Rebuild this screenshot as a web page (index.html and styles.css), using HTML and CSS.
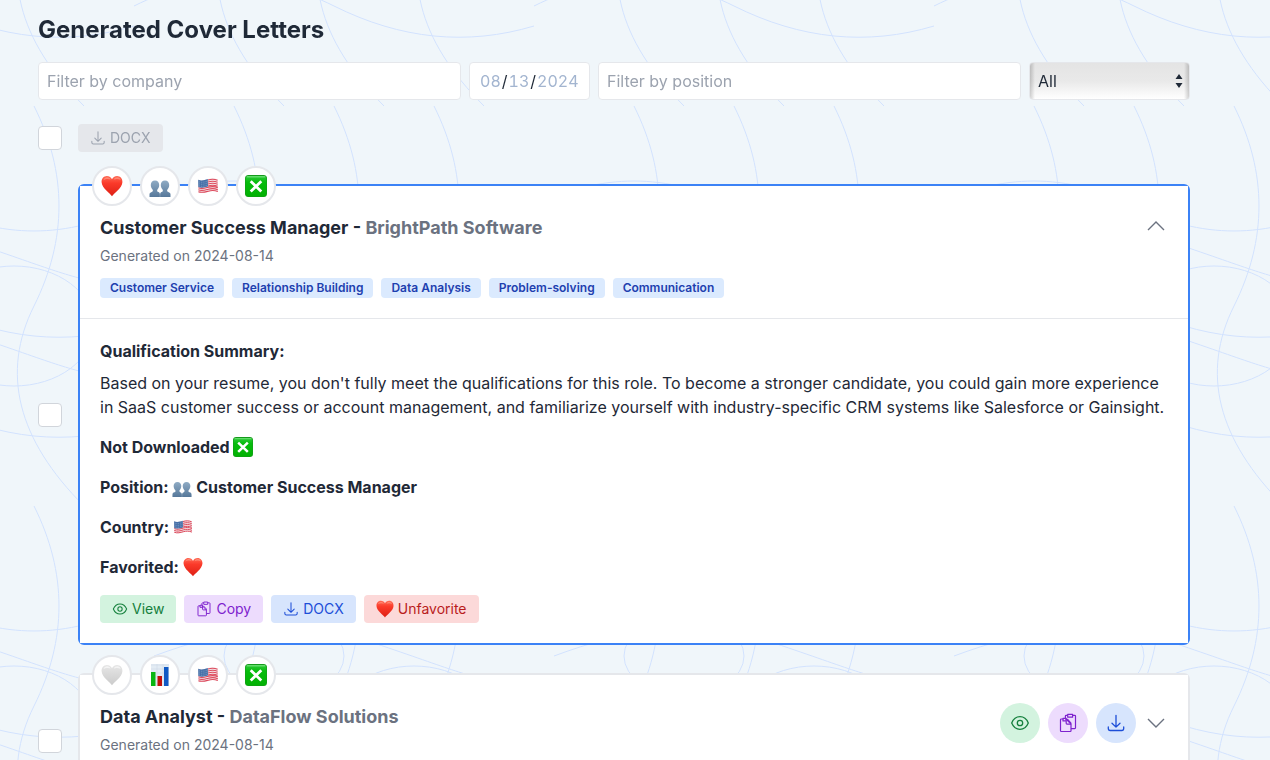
FILE: index.html
```html
<!DOCTYPE html>
<html lang="en-US">
<head>
<meta charset="utf-8">
<meta name="viewport" content="width=device-width, initial-scale=1">
<title>Generated Cover Letters</title>
<link rel="stylesheet" href="styles.css">
</head>
<body>
<svg class="backdrop" aria-hidden="true">
  <defs>
    <pattern id="waves" width="400" height="400" patternUnits="userSpaceOnUse" patternTransform="translate(134 106)">
      <g fill="none" stroke="#d2e2fe">
        <path d="M100 0C133.3 66.7 133.3 133.3 100 200S83.3 333.3 150 400"/>
        <path d="M200 0C233.3 66.7 233.3 133.3 200 200S183.3 333.3 250 400"/>
        <path d="M300 0C333.3 66.7 333.3 133.3 300 200S283.3 333.3 350 400"/>
        <path d="M0 100C66.7 66.7 133.3 66.7 200 100S333.3 133.3 400 100"/>
        <path d="M0 200C66.7 166.7 133.3 166.7 200 200S333.3 240 400 220"/>
        <path d="M0 300C66.7 266.7 133.3 266.7 200 300S333.3 340 400 320"/>
        <path d="M20 150C90 124 160 110 240 137S330 170 380 180"/>
        <path d="M20 243C90 217 160 203 240 230S330 263 380 273"/>
        <ellipse cx="150" cy="150" rx="60" ry="40"/>
        <ellipse cx="280" cy="220" rx="80" ry="60"/>
      </g>
    </pattern>
    <linearGradient id="heart-red" x1="0" y1="0" x2="0" y2="1"><stop offset="0" stop-color="#ff6a55"/><stop offset=".35" stop-color="#fb3a2a"/><stop offset="1" stop-color="#dd1f14"/></linearGradient>
    <linearGradient id="heart-grey" x1="0" y1="0" x2="0" y2="1"><stop offset="0" stop-color="#e6e6e6"/><stop offset="1" stop-color="#cbcbcb"/></linearGradient>
    <linearGradient id="bust" x1="0" y1="0" x2="0" y2="1"><stop offset="0" stop-color="#8fabc4"/><stop offset="1" stop-color="#56789a"/></linearGradient>
    <linearGradient id="green" x1="0" y1="0" x2="0" y2="1"><stop offset="0" stop-color="#2fc83a"/><stop offset=".3" stop-color="#06bd0c"/><stop offset="1" stop-color="#02b003"/></linearGradient>
    <symbol id="e-heart" viewBox="0 0 22 22">
      <path fill="url(#heart-red)" d="M11 21.300C9.500 18.500 1 13.500.6 7.200.4 3.800 2.600 1 5.900 1 8.300 1 10.200 2.300 11 4.300 11.800 2.300 13.700 1 16.100 1c3.300 0 5.500 2.800 5.300 6.200C21 13.500 12.500 18.500 11 21.300z"/>
      <path fill="#ff9a84" opacity=".7" d="M2.500 5.200C3 3.200 4.500 2.300 6.200 2.300s2.900.9 3.400 2.300C8 3.700 4.500 3.600 2.500 5.200zM12.800 4.600c.6-1.500 1.800-2.300 3.400-2.300 1.700 0 3 .9 3.500 2.600-2-1.200-5-1.200-6.900-.3z"/>
    </symbol>
    <symbol id="e-heart-off" viewBox="0 0 22 22">
      <path fill="url(#heart-grey)" d="M11 21.300C9.500 18.500 1 13.500.6 7.200.4 3.800 2.600 1 5.900 1 8.300 1 10.200 2.300 11 4.300 11.800 2.300 13.700 1 16.100 1c3.300 0 5.500 2.800 5.300 6.200C21 13.500 12.500 18.500 11 21.300z"/>
      <path fill="#fff" opacity=".6" d="M2.500 5.200C3 3.200 4.500 2.300 6.200 2.300s2.900.9 3.400 2.300C8 3.700 4.500 3.600 2.500 5.200zM12.800 4.600c.6-1.500 1.800-2.300 3.400-2.300 1.700 0 3 .9 3.500 2.600-2-1.200-5-1.200-6.900-.3z"/>
    </symbol>
    <symbol id="e-people" viewBox="0 0 22 22">
      <g fill="url(#bust)">
        <path d="M6 5.500c2.700 0 4.200 2 4.200 4.500 0 2-.9 3.700-1.900 4.700-.4 1.300 0 1.900 1.100 2.300 1 .4 1.500 1.200 1.500 2.400V22H.5v-2.600c0-1.400.8-2 2.200-2.500 1.200-.4 1.400-1 1-2.200-1-1-1.900-2.700-1.900-4.700 0-2.500 1.500-4.500 4.200-4.500z"/>
        <path d="M16 5.500c2.700 0 4.200 2 4.200 4.500 0 2-.9 3.700-1.900 4.700-.4 1.200-.2 1.800 1 2.200 1.400.5 2.200 1.100 2.200 2.500V22H11.100v-2.600c0-1.200.5-2 1.500-2.400 1.100-.4 1.500-1 1.100-2.300-1-1-1.900-2.700-1.900-4.700 0-2.500 1.500-4.500 4.200-4.500z"/>
      </g>
    </symbol>
    <symbol id="e-flag" viewBox="0 0 22 22">
      <path fill="#f5e9ec" d="M1.200 4.700c3.400 1.500 6.300.3 9.600-.6 3.300-1 6.500-1.100 9.800.4l.5 12.400c-3.400-1.600-6.300-1.200-9.700-.2-3.500 1-6.400 1.900-10 .7z"/>
      <path fill="none" stroke="#dd4a5c" stroke-width="1.100" d="M11 5c3.200-1 6.300-1.100 9.600.3M11 7c3.200-1 6.300-1.100 9.600.3M11 9c3.200-1 6.300-1.100 9.700.3M11 11c3.200-1 6.300-1.100 9.700.3M1.400 12.800c3.600 1.500 6.600.3 9.900-.6 3.200-.9 6.200-1 9.500.5M1.400 14.800c3.600 1.500 6.600.3 9.900-.6 3.200-.9 6.200-1 9.500.5M1.400 16.800c3.600 1.300 6.600.3 9.900-.6 3.200-.9 6.200-1 9.500.4"/>
      <path fill="#4670a8" d="M1.200 4.700c3.400 1.500 6.300.3 9.600-.6l.2 7.500c-3.400 1-6.300 1.700-9.700.5z"/>
      <path fill="none" stroke="#a8bedb" stroke-width=".7" stroke-dasharray=".7 1.200" d="M2 6.800c3 1 5.700.2 8.300-.7M2 8.800c3 1 5.700.2 8.300-.7M2 10.800c3 1 5.700.2 8.300-.7"/>
    </symbol>
    <symbol id="e-cross" viewBox="0 0 22 22">
      <rect width="22" height="22" rx="3.500" fill="#159a1b"/>
      <rect x=".6" y="1" width="20.800" height="20.500" rx="3" fill="url(#green)"/>
      <rect x="1.500" y="1" width="19" height="1.600" rx=".8" fill="#6fe277" opacity=".8"/>
      <path stroke="#fff" stroke-width="2.800" d="M5.700 6.200l10.600 10.200M16.300 6.200L5.700 16.400"/>
    </symbol>
    <symbol id="e-chart" viewBox="0 0 22 22">
      <path fill="#e3ecf4" d="M2 0h18v22H2z"/>
      <path stroke="#c8d7e4" stroke-width=".5" d="M2 1h18M2 5h18M2 9h18M2 13h18M8 0v22M14 0v22"/>
      <path fill="#08b512" d="M2 8h4.500v14H2z"/><path fill="#c1120d" d="M8.500 12H13v10H8.500z"/><path fill="#1059c4" d="M15 3h4.500v19H15z"/>
    </symbol>
    <symbol id="i-eye" viewBox="0 0 20 20">
      <g fill="none" stroke="currentColor" stroke-width="1.300"><path d="M1.700 10C3.500 5.600 6.400 3.700 10 3.700s6.500 1.900 8.300 6.300c-1.800 4.400-4.700 6.300-8.300 6.300S3.500 14.400 1.700 10z"/><circle cx="10" cy="10" r="2.700"/></g>
    </symbol>
    <symbol id="i-copy" viewBox="0 0 20 20">
      <g fill="none" stroke="currentColor" stroke-width="1.200" stroke-linejoin="round"><path d="M5.500 6H3.300q-.8 0-.8.800v10.900q0 .8.800.8h8.900q.8 0 .8-.8v-6.500L8 6H7"/><path d="M5 5.300h3.200v2.600H5zM8.200 6v4.300q0 .8.800.8h4"/><path d="M7.400 5V3.100q0-.8.800-.8h1.400M14.700 2.300h2q.8 0 .8.800v11.700q0 .8-.8.800H13"/><path d="M9.700 1.300h4.900v2.900H9.700zM12.800 11.200V9.800L9.200 6"/></g>
    </symbol>
    <symbol id="i-download" viewBox="0 0 20 20">
      <g fill="none" stroke="currentColor" stroke-width="1.300" stroke-linecap="round" stroke-linejoin="round"><path d="M10 2.300V14M6 10.200l4 3.900 4-3.900M2.300 14v1.600q0 1.900 1.900 1.900h11.600q1.900 0 1.900-1.900V14"/></g>
    </symbol>
    <symbol id="i-up" viewBox="0 0 24 24"><path fill="none" stroke="currentColor" stroke-width="1.400" d="M4 16l8-8 8 8"/></symbol>
    <symbol id="i-down" viewBox="0 0 24 24"><path fill="none" stroke="currentColor" stroke-width="1.400" d="M4 8l8 8 8-8"/></symbol>
  </defs>
  <rect width="100%" height="100%" fill="url(#waves)"/>
</svg>

<main class="page">
  <h1 class="page-title">Generated Cover Letters</h1>

  <form class="filters">
    <input class="field field-grow" type="text" placeholder="Filter by company" aria-label="Filter by company">
    <input class="field field-date" type="date" value="2024-08-13" aria-label="Filter by date">
    <input class="field field-grow" type="text" placeholder="Filter by position" aria-label="Filter by position">
    <div class="select-wrap">
      <select class="field field-select" aria-label="Status"><option>All</option></select>
      <svg class="select-arrows" viewBox="0 0 8 16" aria-hidden="true"><path fill="#1f2937" d="M4 1l3.500 5h-7zM4 15L.5 10h7z"/></svg>
    </div>
  </form>

  <div class="row toolbar">
    <input class="check" type="checkbox" aria-label="Select all">
    <button class="btn btn-disabled" type="button" disabled><svg class="icon"><use href="#i-download"/></svg>DOCX</button>
  </div>

  <div class="letters">
    <div class="row">
      <input class="check" type="checkbox" aria-label="Select Customer Success Manager">
      <article class="card card-open">
        <div class="badges">
          <span class="badge"><svg class="badge-emoji"><use href="#e-heart"/></svg></span>
          <span class="badge"><svg class="badge-emoji"><use href="#e-people"/></svg></span>
          <span class="badge"><svg class="badge-emoji"><use href="#e-flag"/></svg></span>
          <span class="badge"><svg class="badge-emoji"><use href="#e-cross"/></svg></span>
        </div>
        <header class="card-head">
          <div class="card-info">
            <h2 class="card-title">Customer Success Manager - <span class="company">BrightPath Software</span></h2>
            <p class="card-date">Generated on 2024-08-14</p>
            <ul class="tags">
              <li class="tag">Customer Service</li>
              <li class="tag">Relationship Building</li>
              <li class="tag">Data Analysis</li>
              <li class="tag">Problem-solving</li>
              <li class="tag">Communication</li>
            </ul>
          </div>
          <div class="actions">
            <button class="toggle" type="button" aria-label="Collapse"><svg class="toggle-icon"><use href="#i-up"/></svg></button>
          </div>
        </header>
        <div class="card-body">
          <div class="summary">
            <h3 class="line">Qualification Summary:</h3>
            <p class="text">Based on your resume, you don't fully meet the qualifications for this role. To become a stronger candidate, you could gain more experience in SaaS customer success or account management, and familiarize yourself with industry-specific CRM systems like Salesforce or Gainsight.</p>
          </div>
          <p class="line">Not Downloaded <svg class="emoji"><use href="#e-cross"/></svg></p>
          <p class="line">Position: <svg class="emoji"><use href="#e-people"/></svg> Customer Success Manager</p>
          <p class="line">Country: <svg class="emoji"><use href="#e-flag"/></svg></p>
          <p class="line">Favorited: <svg class="emoji"><use href="#e-heart"/></svg></p>
          <div class="buttons">
            <button class="btn green" type="button"><svg class="icon"><use href="#i-eye"/></svg>View</button>
            <button class="btn purple" type="button"><svg class="icon"><use href="#i-copy"/></svg>Copy</button>
            <button class="btn blue" type="button"><svg class="icon"><use href="#i-download"/></svg>DOCX</button>
            <button class="btn red" type="button"><svg class="icon icon-heart"><use href="#e-heart"/></svg>Unfavorite</button>
          </div>
        </div>
      </article>
    </div>

    <div class="row">
      <input class="check" type="checkbox" aria-label="Select Data Analyst">
      <article class="card">
        <div class="badges">
          <span class="badge"><svg class="badge-emoji"><use href="#e-heart-off"/></svg></span>
          <span class="badge"><svg class="badge-emoji"><use href="#e-chart"/></svg></span>
          <span class="badge"><svg class="badge-emoji"><use href="#e-flag"/></svg></span>
          <span class="badge"><svg class="badge-emoji"><use href="#e-cross"/></svg></span>
        </div>
        <header class="card-head">
          <div class="card-info">
            <h2 class="card-title">Data Analyst - <span class="company">DataFlow Solutions</span></h2>
            <p class="card-date">Generated on 2024-08-14</p>
            <ul class="tags"></ul>
          </div>
          <div class="actions">
            <button class="round green" type="button" aria-label="View"><svg class="icon-lg"><use href="#i-eye"/></svg></button>
            <button class="round purple" type="button" aria-label="Copy"><svg class="icon-lg"><use href="#i-copy"/></svg></button>
            <button class="round blue" type="button" aria-label="Download"><svg class="icon-lg"><use href="#i-download"/></svg></button>
            <button class="toggle" type="button" aria-label="Expand"><svg class="toggle-icon"><use href="#i-down"/></svg></button>
          </div>
        </header>
      </article>
    </div>
  </div>
</main>
</body>
</html>
```

FILE: styles.css
```css
*, *::before, *::after { box-sizing: border-box; }

body {
  margin: 0;
  height: 100vh;
  overflow: hidden;
  background: #f0f6fa;
  color: #1f2937;
  font-family: Inter, "Liberation Sans", sans-serif;
  font-size: 16px;
  line-height: 24px;
}

h1, h2, h3, p, ul { margin: 0; padding: 0; }
ul { list-style: none; }
button, input, select { font: inherit; color: inherit; margin: 0; }
button { border: 0; padding: 0; cursor: pointer; }
svg { display: block; flex: none; }

.backdrop {
  position: fixed;
  inset: 0;
  width: 100%;
  height: 100%;
  z-index: -1;
}

.page { padding: 14px 80px 32px 38px; }

.page-title {
  font-size: 24px;
  line-height: 32px;
  font-weight: 700;
  margin-bottom: 16px;
}

.filters { display: flex; gap: 8px; margin-bottom: 24px; }

.field {
  height: 38px;
  min-width: 0;
  padding: 0 8px;
  border: 1px solid #e5e7eb;
  border-radius: 4px;
  background: #fff;
}
.field::placeholder { color: #9ca3af; opacity: 1; }
.field-grow { flex: 1; }
.field-date { width: 121px; padding: 0 9px; font-variant-numeric: tabular-nums; }
.field-date::-webkit-calendar-picker-indicator { display: none; }
.field-date::-webkit-datetime-edit { padding: 0; }
.field-date::-webkit-datetime-edit-fields-wrapper { padding: 0; }
.field-date::-webkit-datetime-edit-month-field,
.field-date::-webkit-datetime-edit-day-field,
.field-date::-webkit-datetime-edit-year-field { color: #a3b5d0; padding: 0 1px; }

.select-wrap { position: relative; width: 161px; }
.field-select {
  width: 100%;
  appearance: none;
  background:
    linear-gradient(to right, rgba(0, 0, 0, .18), transparent 5px, transparent calc(100% - 5px), rgba(0, 0, 0, .18)),
    linear-gradient(#e4e4e4, #e9e9e9 50%, #fff);
}
.select-arrows {
  position: absolute;
  top: 11px;
  right: 7px;
  width: 8px;
  height: 16px;
  pointer-events: none;
}

.row { display: flex; align-items: center; gap: 16px; }
.toolbar { margin-bottom: 32px; }
.letters { display: flex; flex-direction: column; gap: 28px; }

.check {
  appearance: none;
  flex: none;
  width: 24px;
  height: 24px;
  border: 1px solid #d1d5db;
  border-radius: 4px;
  background: #fff;
}

.btn {
  display: inline-flex;
  align-items: center;
  gap: 4px;
  padding: 4px 12px;
  border-radius: 4px;
  font-size: 14px;
  line-height: 20px;
}
.btn-disabled { background: #e5e7eb; color: #9ca3af; }
.icon { width: 16px; height: 16px; }
.icon-heart { width: 18px; height: 18px; }
.icon-lg { width: 20px; height: 20px; }

.green { background: #d3f3df; color: #15803d; }
.purple { background: #eddcfd; color: #7e22ce; }
.blue { background: #d7e5fd; color: #1d4ed8; }
.red { background: #fcd9d9; color: #b91c1c; }

.card {
  position: relative;
  flex: 1;
  min-width: 0;
  border: 2px solid #e5e7eb;
  border-radius: 6px;
}
.card-open { border-color: #3b82f6; }

.badges {
  position: absolute;
  top: -20px;
  left: 12px;
  display: flex;
  gap: 8px;
}
.badge {
  display: flex;
  align-items: center;
  justify-content: center;
  width: 40px;
  height: 40px;
  border: 2px solid #e5e7eb;
  border-radius: 50%;
  background: #fff;
}
.badge-emoji { width: 22px; height: 22px; }

.card-head {
  display: flex;
  align-items: flex-start;
  justify-content: space-between;
  gap: 16px;
  padding: 28px 20px 20px;
  background: #fff;
}
.card-title { font-size: 18px; line-height: 28px; font-weight: 700; }
.company { color: #6b7280; }
.card-date { margin-top: 4px; font-size: 14px; line-height: 20px; color: #6b7280; }
.tags { display: flex; flex-wrap: wrap; gap: 8px; min-height: 20px; margin-top: 12px; }
.tag {
  padding: 0 10px;
  border-radius: 4px;
  background: #dbeafe;
  color: #1e40af;
  font-size: 12px;
  line-height: 20px;
  font-weight: 600;
}

.actions { display: flex; align-items: center; gap: 8px; }
.round {
  display: flex;
  align-items: center;
  justify-content: center;
  width: 40px;
  height: 40px;
  border-radius: 50%;
}
.toggle { background: none; color: #6b7280; }
.toggle-icon { width: 24px; height: 24px; }

.card-body {
  display: flex;
  flex-direction: column;
  gap: 16px;
  padding: 20px;
  border-top: 1px solid #e5e7eb;
  background: #fff;
}
.line { height: 24px; font-size: 16px; line-height: 24px; font-weight: 700; }
.text { margin-top: 8px; }
.emoji { display: inline-block; width: 20px; height: 20px; vertical-align: -4px; }
.buttons { display: flex; flex-wrap: wrap; gap: 8px; }
```
